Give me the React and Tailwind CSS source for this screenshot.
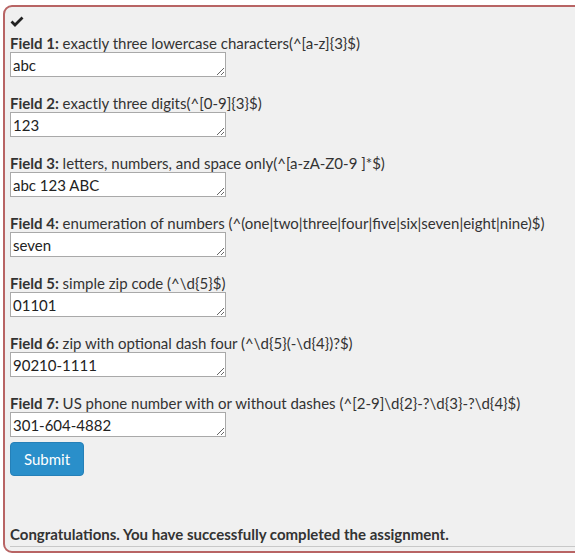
import React from "react";

const fields = [
  { n: 1, label: "exactly three lowercase characters(^[a-z]{3}$)", value: "abc" },
  { n: 2, label: "exactly three digits(^[0-9]{3}$)", value: "123" },
  { n: 3, label: "letters, numbers, and space only(^[a-zA-Z0-9 ]*$)", value: "abc 123 ABC" },
  { n: 4, label: "enumeration of numbers (^(one|two|three|four|five|six|seven|eight|nine)$)", value: "seven" },
  { n: 5, label: "simple zip code (^\\d{5}$)", value: "01101" },
  { n: 6, label: "zip with optional dash four (^\\d{5}(-\\d{4})?$)", value: "90210-1111" },
  { n: 7, label: "US phone number with or without dashes (^[2-9]\\d{2}-?\\d{3}-?\\d{4}$)", value: "301-604-4882" },
];

function Check() {
  return (
    <svg width="14" height="11" viewBox="0 0 14 11" className="block">
      <path d="M1.5 5.5 L5 9 L12.5 1.5" fill="none" stroke="#222" strokeWidth="2.8" />
    </svg>
  );
}

export default function App() {
  return (
    <div className="w-[575px] h-[557px] overflow-hidden bg-white pt-[5px] pl-[3px] font-['Lato','Liberation_Sans',sans-serif] text-[15px] text-[#333]">
      <div className="w-[620px] h-[548px] bg-[#f0f0f0] border-2 border-[#b86464] rounded-[9px] pl-[5px] pt-[9px] flex flex-col">
        <Check />
        <div className="mt-[7px] flex flex-col gap-[17px]">
          {fields.map((f) => (
            <div key={f.n}>
              <div className="leading-[18px]">
                <b>Field {f.n}:</b> {f.label}
              </div>
              <textarea
                readOnly
                defaultValue={f.value}
                rows={1}
                className="block w-[216px] h-[25px] bg-white border border-[#a9a9a9] px-[2px] pt-[1px] pb-0 leading-[22px] text-[15px] text-[#222] resize overflow-hidden outline-none"
              />
            </div>
          ))}
        </div>
        <button className="mt-[5px] w-[74px] h-[34px] bg-[#2a8fca] border border-[#2580b8] rounded-[4px] text-white text-[15px]">
          Submit
        </button>
        <div className="mt-auto mb-[4px] mr-[40px] border-b border-[#c8c8c8] pb-[2px] font-bold leading-[20px]">
          Congratulations. You have successfully completed the assignment.
        </div>
      </div>
    </div>
  );
}
